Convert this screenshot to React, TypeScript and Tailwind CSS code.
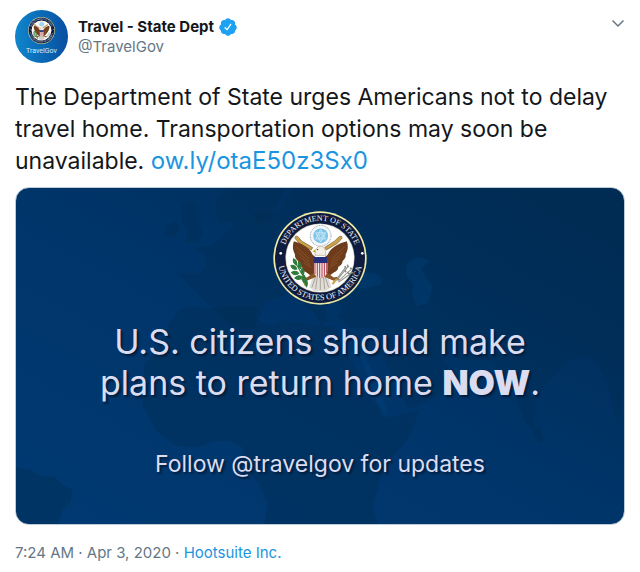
import { useId } from "react";

function Seal({ className }: { className?: string }) {
  const id = useId();
  const top = `${id}-top`;
  const bottom = `${id}-bottom`;
  return (
    <svg viewBox="0 0 280 280" className={className} role="img" aria-label="Department of State seal">
      <circle cx="140" cy="140" r="139" fill="#f0eea6" />
      <circle cx="140" cy="140" r="134" fill="#101c3f" />
      <circle cx="140" cy="140" r="103" fill="#c9cdb4" />
      <circle cx="140" cy="140" r="101" fill="#ffffff" />
      <path id={top} d="M29 140a111 111 0 0 1 222 0" fill="none" />
      <path id={bottom} d="M14 140a126 126 0 0 0 252 0" fill="none" />
      <g fill="#f1f2f6" fontFamily="'Liberation Serif', serif" textAnchor="middle">
        <text fontSize="24">
          <textPath href={`#${top}`} startOffset="50%">DEPARTMENT OF STATE</textPath>
        </text>
        <text fontSize="25">
          <textPath href={`#${bottom}`} startOffset="50%">UNITED STATES OF AMERICA</textPath>
        </text>
      </g>
      <circle cx="23" cy="126" r="4" fill="#fff" />
      <circle cx="266" cy="126" r="4" fill="#fff" />

      {/* glory with its ring of clouds and stars */}
      <circle cx="142" cy="74" r="31" fill="#f4f7f9" stroke="#a9b4ba" strokeWidth="3" strokeDasharray="3 2" />
      <circle cx="142" cy="74" r="22" fill="#7cc4e6" />
      <g fill="none" stroke="#e8f6fd" strokeWidth="2">
        <path d="M142 56l15 27h-30zM142 92l15-27h-30z" />
        <circle cx="142" cy="74" r="5" />
      </g>

      {/* scrolls beside the head */}
      <path d="M66 82q-2-10 8-6l12 14 32 19-4 7-34-18z" fill="#c9a24a" stroke="#7b5a24" strokeWidth="2" />
      <path d="M205 82q3-9-7-6l-14 13-30 20 5 7 32-19z" fill="#c9a24a" stroke="#7b5a24" strokeWidth="2" />

      {/* wings */}
      <path
        d="M62 90c13 3 24 8 34 15 10 6 17 14 22 25l12 10-4 46-14 6-12-9c-10-4-14-10-13-16-9-5-13-12-12-18-8-7-11-14-9-19-7-12-9-26-4-40z"
        fill="#6f3c1b"
      />
      <path
        d="M220 90c-13 3-25 8-35 15-10 6-17 14-22 25l-12 10 4 46 14 6 12-9c10-4 14-10 13-16 9-5 14-12 13-18 8-7 11-14 9-19 7-12 9-26 4-40z"
        fill="#6f3c1b"
      />
      <g fill="none" stroke="#925c33" strokeWidth="2">
        <path d="M69 107l40 36M73 122l37 31M82 138l29 23M91 154l22 14" />
        <path d="M213 107l-39 36M209 122l-37 31M200 138l-29 23M191 154l-22 14" />
      </g>

      {/* tail and legs */}
      <path d="M122 185h40l12 42-16 11h-36l-14-11z" fill="#e0ddd6" />
      <path d="M116 228l12-36M127 233l5-38M141 235v-40M154 233l-4-38M166 228l-12-36" stroke="#8e857b" strokeWidth="2" />
      <path d="M121 184l-20 14-10-2-8 8 18 4 28-12zM161 184l20 14 10-2 8 8-18 4-28-12z" fill="#8a5426" />
      <path d="M86 192l10 30M190 202l-13 16" stroke="#c9a24a" strokeWidth="6" />

      {/* head */}
      <path d="M125 132c0-15 5-26 16-27 11-1 17 12 16 27z" fill="#f5f0e6" stroke="#b5a58e" strokeWidth="2" />
      <path d="M126 115l-9 5 10 4z" fill="#d8a52c" />
      <circle cx="133" cy="115" r="2" fill="#3b2a1a" />

      {/* shield */}
      <path d="M122 139h40v39q0 17-20 21-20-4-20-21z" fill="#f6e9e6" />
      <path d="M125 150v38M132 150v45M139 150v49M146 150v49M153 150v44M160 150v36" stroke="#b43e50" strokeWidth="3" />
      <path d="M121 137h42v18h-42z" fill="#26307a" />

      {/* olive branch */}
      <g fill="#2f7a3c" stroke="#2f7a3c" strokeWidth="3" strokeLinejoin="round">
        <path d="M61 142q13 6 9 19-12-5-9-19zM53 162q14-2 18 11-14 3-18-11zM77 152q12 8 5 20-11-7-5-20zM55 183q14-8 22 3-12 9-22-3zM87 171q10 9 2 19-10-8-2-19zM65 200q9-12 22-3-9 12-22 3zM92 190q8 10 0 23-9-12 0-23zM97 202q9 12 3 24-9-12-3-24z" />
        <path d="M66 152l18 33 13 15" fill="none" />
      </g>

      {/* arrows */}
      <g stroke="#8e9187" strokeWidth="3" fill="none">
        <path d="M190 207l34-42M193 210l40-36M196 212l39-28M190 202l26-34" />
        <path d="M221 160l4 7M229 170l7 2M232 182l6 2M214 164l3 6M222 183l8 5M213 176l5 6" strokeWidth="5" />
      </g>
    </svg>
  );
}

function VerifiedBadge() {
  return (
    <svg viewBox="0 0 24 24" className="size-5 shrink-0" fill="#1da1f2" role="img" aria-label="Verified account">
      <path d="M22.5 12.5c0-1.58-.875-2.95-2.148-3.6.154-.435.238-.905.238-1.4 0-2.21-1.71-3.998-3.818-3.998-.47 0-.92.084-1.336.25C14.818 2.415 13.51 1.5 12 1.5s-2.816.917-3.437 2.25c-.415-.165-.866-.25-1.336-.25-2.11 0-3.818 1.79-3.818 4 0 .494.083.964.237 1.4-1.272.65-2.147 2.018-2.147 3.6 0 1.495.782 2.798 1.942 3.486-.02.17-.032.34-.032.514 0 2.21 1.708 4 3.818 4 .47 0 .92-.086 1.335-.25.62 1.334 1.926 2.25 3.437 2.25 1.512 0 2.818-.916 3.437-2.25.415.163.865.248 1.336.248 2.11 0 3.818-1.79 3.818-4 0-.174-.012-.344-.033-.513 1.158-.687 1.943-1.99 1.943-3.484zm-6.616-3.334l-4.334 6.5c-.145.217-.382.334-.625.334-.143 0-.288-.04-.416-.126l-.115-.094-2.415-2.415c-.293-.293-.293-.768 0-1.06s.768-.294 1.06 0l1.77 1.767 3.825-5.74c.23-.345.696-.436 1.04-.207.346.23.44.696.21 1.04z" />
    </svg>
  );
}

/* Faint world map behind the announcement */
function WorldMap() {
  return (
    <svg
      viewBox="0 0 609 336"
      preserveAspectRatio="xMidYMid slice"
      className="absolute inset-0 size-full"
      aria-hidden="true"
    >
      <g fill="#002c52" fillOpacity="0.4">
        <path d="M0 279l16 3 8 6 16 1 7 8 10 5-2 12-8 8-4 14H0z" />
        <path d="M164 122l10-3 22 1 20-3 25 2v13l14 6 12-6 30 5 22 2 8 18 14 27 18 30 16 16 29-8-10 27-16 18-14 25-7 27 5 17H249l3-20-8-20-13-13-4-24-12-6-14 0-20 6-20-1-20-15-14-26v-20l2-20 12-15 8-18z" />
        <path d="M161 85l22 1 8-8-2-10-8-8 14-2 10-8 12-10 4-14 12-4 8 4 24-4 14-22h321l8 10v190l-5 39-9-38-13-28-10-7-20 8-22 23-8 15-2 31-9-8-8-20-8-27-20-16-30-1-20-10 6 14 13 11-14 18-30 16-8-2-14-30-12-26-2-22-28 0-13-12 6-10-12-4-6 6 2 14-6 4-10-16-14-12-10-4-14 5-8 3-4 12-8 13-10 2-14-5z" />
        <path d="M166 18l8-7 8 6-2 13 8 15-4 8-14 2 3-12-7-8zM153 36l8-3 3 9-6 8-8-3zM205 35l-6-16 9-14 20-5h42l-12 24-15 13-6-14-12-1-8 12z" />
        <path d="M517 244l7-6 5 14-6 3z" />
      </g>
      <g fill="#004684" fillOpacity="0.3">
        <path d="M391 76l11-7 12 3-8 9 5 9 6 9-4 16-12 3-5-13 3-8-8-9z" />
        <path d="M327 92l14-8 22 2 4 10-19 5-21-3z" />
        <path d="M344 167l5-1 20 48 4 16-7-3z" />
      </g>
    </svg>
  );
}

export default function App() {
  return (
    <article className="bg-white px-[15px] pt-[10px] pb-2 font-['Inter',sans-serif] text-[#14171a]">
      <header className="flex items-start">
        <a
          href="#profile"
          aria-label="TravelGov profile"
          className="flex size-[53px] shrink-0 flex-col items-center rounded-full bg-linear-to-r from-[#0f86cd] to-[#0a4fa0] pt-[7px]"
        >
          <Seal className="size-[27px]" />
          <span className="font-['Roboto',sans-serif] text-[7px] leading-[14px] text-[#d9ecfa]">TravelGov</span>
        </a>
        <div className="ml-[10px] flex grow flex-col pt-[6px]">
          <div className="flex items-center gap-1">
            <a href="#profile" className="text-[15px] leading-[21px] font-bold">Travel - State Dept</a>
            <VerifiedBadge />
          </div>
          <a href="#profile" className="text-[15px] leading-5 text-[#657786]">@TravelGov</a>
        </div>
        <button type="button" aria-label="More" className="pt-[9px]">
          <svg viewBox="0 0 14 9" className="h-[9px] w-[14px]" fill="none" stroke="#657786" strokeWidth="1.5">
            <path d="M1.5 1.5L7 7l5.500-5.500" />
          </svg>
        </button>
      </header>

      <p className="mt-[18px] text-[23px] leading-8">
        The Department of State urges Americans not to delay travel home. Transportation options may soon be
        unavailable. <a href="#link" className="text-[24px] text-[#1b95e0]">ow.ly/otaE50z3Sx0</a>
      </p>

      <section className="relative mt-[10px] flex flex-col items-center overflow-hidden rounded-[14px] border border-[#bccbd8] bg-linear-to-bl from-[#002a52] via-[#00356a] to-[#003a72] pt-[23px] pb-[45px] text-[#dcdcf0] [text-shadow:2px_2px_2px_#001c3c]">
        <WorldMap />
        <Seal className="relative size-[94px]" />
        <h1 className="relative mt-4 text-center text-[34px] leading-[41px]">
          U.S. citizens should make
          <br />
          plans to return home <strong className="font-black">NOW</strong>.
        </h1>
        <p className="relative mt-[46px] text-[23px] leading-[30px]">Follow @travelgov for updates</p>
      </section>

      <footer className="mt-[18px] text-[15px] leading-5 text-[#657786]">
        <time dateTime="2020-04-03T07:24">7:24 AM · Apr 3, 2020</time> ·{" "}
        <a href="#source" className="text-[#1b95e0]">Hootsuite Inc.</a>
      </footer>
    </article>
  );
}
